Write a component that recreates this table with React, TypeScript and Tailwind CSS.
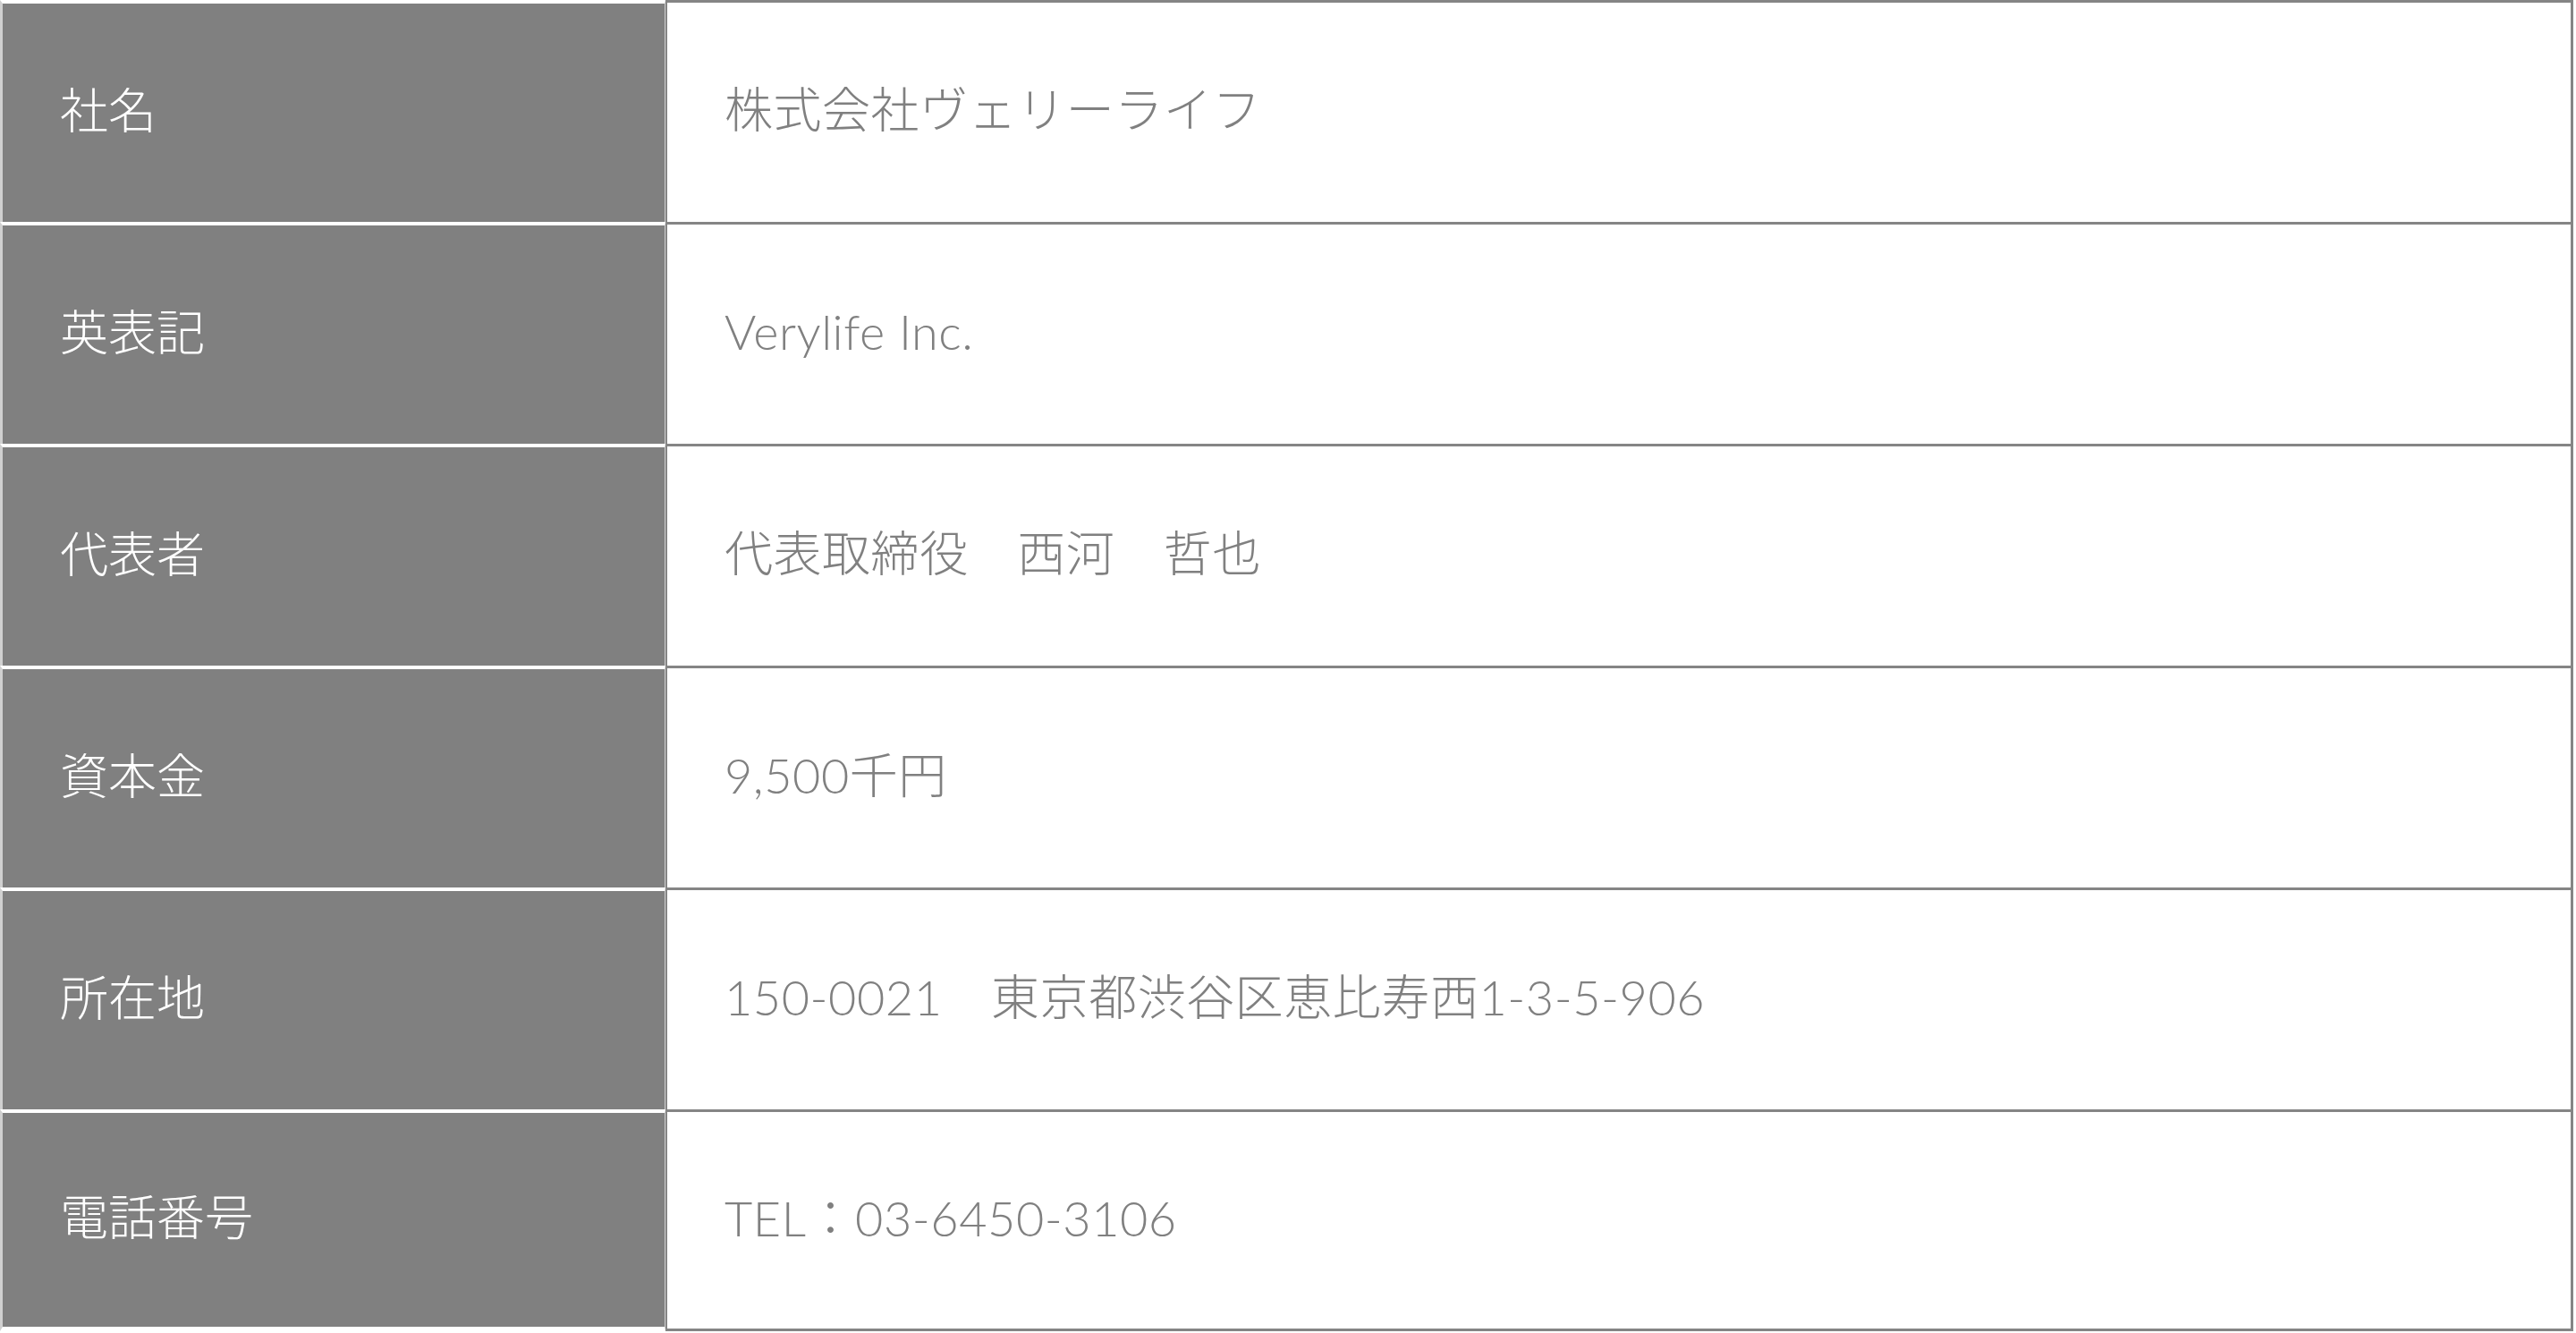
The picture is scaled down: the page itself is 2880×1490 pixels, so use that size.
const rows: { label: string; value: string }[] = [
  { label: '社名', value: '株式会社ヴェリーライフ' },
  { label: '英表記', value: 'Verylife Inc.' },
  { label: '代表者', value: '代表取締役　西河　哲也' },
  { label: '資本金', value: '9,500千円' },
  { label: '所在地', value: '150-0021　東京都渋谷区恵比寿西1-3-5-906' },
  { label: '電話番号', value: 'TEL：03-6450-3106' },
]

export default function App() {
  return (
    <div
      className="h-[1490px] w-full bg-white"
      style={{ fontFamily: 'Lato, "Noto Sans CJK JP", "Noto Sans", sans-serif' }}
    >
      <div className="w-[2877px]">
        {rows.map((row, idx) => {
          const last = idx === rows.length - 1
          return (
            <div key={row.label} className="flex h-[248px]">
              {/* label cell */}
              <div
                className={`flex w-[744px] items-center border-t-4 border-r border-l-[3px] border-t-white border-r-[#d0d0d0] border-l-[#d0d0d0] bg-[#808080] pb-[6px] pl-16 text-[54px] font-light text-white ${
                  last ? 'border-b-[5px] border-b-white' : ''
                }`}
              >
                {row.label}
              </div>
              {/* value cell */}
              <div
                className={`flex flex-1 items-center border-t-[3px] border-r-[3px] border-l-2 border-[#858585] pb-[6px] pl-16 text-[54px] font-light tracking-[0.01em] text-[#808080] ${
                  last ? 'border-b-[3px]' : ''
                }`}
              >
                {row.value}
              </div>
            </div>
          )
        })}
      </div>
    </div>
  )
}
